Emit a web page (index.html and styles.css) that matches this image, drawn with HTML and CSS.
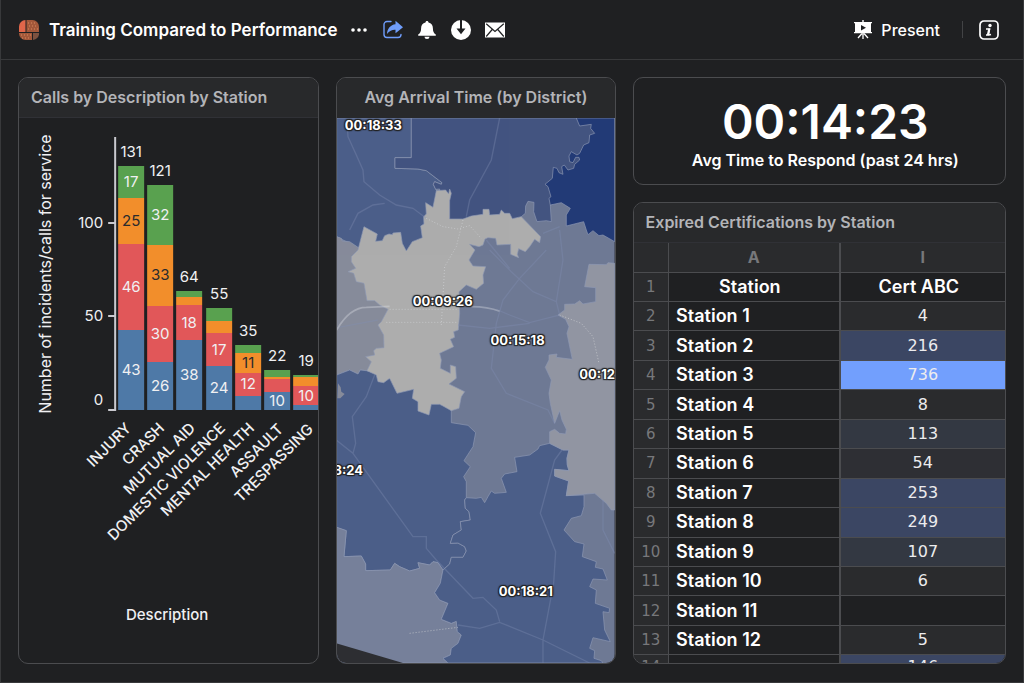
FILE: index.html
```
<!DOCTYPE html>
<html lang="en">
<head>
  <meta charset="UTF-8" />
  <meta name="viewport" content="width=device-width, initial-scale=1" />
  <title>Training Compared to Performance</title>
  <link rel="stylesheet" href="styles.css">
</head>
<body>

  <!-- TOP BAR -->
  <header class="topbar">
    <svg class="logo" viewBox="0 0 20 20" aria-hidden="true">
      <path fill="#e0664a" d="M6.500 0v12H0V6.500A6.500 6.500 0 0 1 6.500 0z"/>
      <path fill="#a3583a" d="M7.500 0h6A6.500 6.500 0 0 1 20 6.500V12H7.500z"/>
      <path fill="#a3583a" d="M0 13h13v7H6.500A6.500 6.500 0 0 1 0 13.500z"/>
      <path fill="#7d5240" d="M14 13h6a6.500 6.500 0 0 1-6 7z"/>
      <path stroke="#d98a5f" stroke-dasharray="1 2" d="M9 3h9M10 6h9M9 9h10M2 15h10M3 18h9"/>
    </svg>
    <h1>Training Compared to Performance</h1>
    <button class="icon-btn more" aria-label="More">
      <svg viewBox="0 0 20 20"><circle cx="4" cy="10" r="1.800"/><circle cx="10" cy="10" r="1.800"/><circle cx="16" cy="10" r="1.800"/></svg>
    </button>
    <button class="icon-btn share" aria-label="Share">
      <svg viewBox="0 0 20 20">
        <path fill="none" stroke="currentColor" stroke-width="1.400" stroke-linecap="round" d="M8 1.500H4A3 3 0 0 0 1 4.500v10a3 3 0 0 0 3 3h11a3 3 0 0 0 3-3"/>
        <path d="M12.500 .8L20 7.200l-7.500 6V9.800C9.500 9.600 6.500 10.600 4 14 4.300 8.700 7.500 4.800 12.500 4.300z"/>
      </svg>
    </button>
    <button class="icon-btn" aria-label="Alerts">
      <svg viewBox="0 0 20 20">
        <path d="M10 1c.9 0 1.500.6 1.500 1.500 2.900.7 4.400 2.900 4.400 5.700 0 3.200.8 4.900 2.900 6.300v1.300H1.200v-1.300c2.100-1.400 2.900-3.100 2.900-6.300 0-2.800 1.500-5 4.400-5.700C8.500 1.600 9.100 1 10 1z"/>
        <path d="M7.500 16.800h5a2.500 2.200 0 0 1-5 0z"/>
      </svg>
    </button>
    <button class="icon-btn" aria-label="Download">
      <svg viewBox="0 0 20 20">
        <circle cx="10" cy="10" r="10"/>
        <path fill="#1f2022" d="M9 0h2v8.500h3.500L10 14.200 5.500 8.500H9z"/>
      </svg>
    </button>
    <button class="icon-btn" aria-label="Email">
      <svg viewBox="0 0 20 20">
        <path d="M0 2.500h20v15H0z"/>
        <path fill="none" stroke="#1f2022" stroke-width="1.200" d="M1.200 3.700L10 11.500l8.800-7.800M1.200 16.500l6-7M18.800 16.500l-6-7"/>
      </svg>
    </button>

    <div class="topbar-right">
      <button class="present">
        <svg viewBox="0 0 20 20">
          <path d="M9.300 0h1.400v2h8.300v1.200h-1V12h1v1.300H1V12h1V3.200H1V2h8.300z"/>
          <path fill="#1f2022" d="M8 5l5 2.700-5 2.700z"/>
          <path fill="none" stroke="currentColor" stroke-width="1.300" d="M10 13v6M9 13.500L5 18M11 13.500l4 4.500"/>
        </svg>
        Present
      </button>
      <span class="divider"></span>
      <button class="icon-btn" aria-label="Info">
        <svg viewBox="0 0 20 20">
          <rect x="1" y="1" width="18" height="18" rx="4" fill="none" stroke="currentColor" stroke-width="1.700"/>
          <circle cx="11" cy="5.500" r="1.700"/>
          <path fill="none" stroke="currentColor" stroke-width="1.500" d="M7 9h3.500l-1.300 5.500q0 .9 2.800 0M7 15h3"/>
          <path fill="none" stroke="currentColor" stroke-width="2.200" d="M10.300 8.600L9 15"/>
        </svg>
      </button>
    </div>
  </header>

  <main class="board">

    <!-- CALLS CHART -->
    <section class="card">
      <h2>Calls by Description by Station</h2>
      <svg class="chart" viewBox="19 118 299 545" role="img" aria-label="Calls by description by station">
        <g class="axis">
          <path d="M108 410h8M108 223h8M108 316h8M115 137v274"/>
        </g>
        <g class="blue">
          <rect x="118" y="330" width="26" height="80"/>
          <rect x="147" y="362" width="26" height="48"/>
          <rect x="176" y="340" width="26" height="70"/>
          <rect x="206" y="366" width="26" height="44"/>
          <rect x="235" y="396" width="26" height="14"/>
          <rect x="264" y="392" width="26" height="18"/>
          <rect x="293" y="405" width="26" height="5"/>
        </g>
        <g class="red">
          <rect x="118" y="244" width="26" height="86"/>
          <rect x="147" y="306" width="26" height="56"/>
          <rect x="176" y="305" width="26" height="35"/>
          <rect x="206" y="333" width="26" height="33"/>
          <rect x="235" y="373" width="26" height="23"/>
          <rect x="264" y="379" width="26" height="13"/>
          <rect x="293" y="386" width="26" height="19"/>
        </g>
        <g class="orange">
          <rect x="118" y="198" width="26" height="46"/>
          <rect x="147" y="245" width="26" height="61"/>
          <rect x="176" y="297" width="26" height="8"/>
          <rect x="206" y="321" width="26" height="12"/>
          <rect x="235" y="353" width="26" height="20"/>
          <rect x="264" y="377" width="26" height="2"/>
          <rect x="293" y="377" width="26" height="9"/>
        </g>
        <g class="green">
          <rect x="118" y="166" width="26" height="32"/>
          <rect x="147" y="185" width="26" height="60"/>
          <rect x="176" y="291" width="26" height="6"/>
          <rect x="206" y="308" width="26" height="13"/>
          <rect x="235" y="345" width="26" height="8"/>
          <rect x="264" y="370" width="26" height="7"/>
          <rect x="293" y="375" width="26" height="2"/>
        </g>

        <!-- totals and segment values -->
        <g class="values">
          <text x="131" y="157">131</text>
          <text x="160" y="176">121</text>
          <text x="189" y="282">64</text>
          <text x="219" y="299">55</text>
          <text x="248" y="336">35</text>
          <text x="277" y="361">22</text>
          <text x="306" y="366">19</text>
          <text x="131" y="187">17</text>
          <text x="131" y="292">46</text>
          <text x="131" y="375">43</text>
          <text x="160" y="220">32</text>
          <text x="160" y="339">30</text>
          <text x="160" y="391">26</text>
          <text x="189" y="328">18</text>
          <text x="189" y="380">38</text>
          <text x="219" y="355">17</text>
          <text x="219" y="393">24</text>
          <text x="248" y="389">12</text>
          <text x="277" y="406">10</text>
          <text x="306" y="401">10</text>
          <g class="dark">
            <text x="131" y="226">25</text>
            <text x="160" y="280">33</text>
            <text x="248" y="368">11</text>
          </g>
        </g>

        <g class="ticks">
          <text x="103" y="228">100</text>
          <text x="103" y="321">50</text>
          <text x="103" y="405">0</text>
        </g>
        <g class="categories">
          <text transform="translate(132 429) rotate(-45)">INJURY</text>
          <text transform="translate(165 429) rotate(-45)">CRASH</text>
          <text transform="translate(196 429) rotate(-45)">MUTUAL AID</text>
          <text transform="translate(226 429) rotate(-45)">DOMESTIC VIOLENCE</text>
          <text transform="translate(255 429) rotate(-45)">MENTAL HEALTH</text>
          <text transform="translate(284 430) rotate(-45)">ASSAULT</text>
          <text transform="translate(314 430) rotate(-45)">TRESPASSING</text>
        </g>
        <text class="y-title" transform="translate(51 274) rotate(-90)">Number of incidents/calls for service</text>
        <text class="x-title" x="167" y="620">Description</text>
      </svg>
    </section>

    <!-- DISTRICT MAP -->
    <section class="card">
      <h2 class="centered">Avg Arrival Time (by District)</h2>
      <div class="map">
        <svg viewBox="21 144 834 1635" preserveAspectRatio="xMidYMid slice" aria-hidden="true">
          <rect x="21" y="144" width="834" height="1635" fill="#6e7994"/>
          <g class="districts">
            <path fill="#4c5f89" d="M21 144H245V263H196V295L265 297 290 302 337 338 335 343 315 335 311 343 322 365 316 500 230 580 100 560 60 520 21 500z"/>
            <path fill="#435480" d="M245 144H800V200L700 385 662 405 665 455 650 452 622 455 612 425 613 397 595 394 588 408 587 430 575 440 520 500H330L330 357 318 358 311 343 315 335 335 343 337 338 290 302 265 297 196 295V263H245z"/>
            <path fill="#223a76" d="M740 144H855V515L820 495 808 497 790 482 775 494 770 480 762 455 710 468V435L722 415 695 398 662 405 658 385 664 380 655 350 646 343 668 325 671 292 682 295 688 308 700 313 696 290 704 285 715 300 732 295 735 283 750 270 748 262 738 262 730 278 720 275 718 258 725 245 742 255 750 250 762 225 778 218 780 195 795 190 783 175 785 163 750 168z"/>
            <path fill="#868b9a" d="M21 500L35 505 38 513 60 515 85 532 200 600V900L110 902 92 900 85 912 60 900 21 915z"/>
            <path fill="#4b5e88" d="M21 915L60 900 85 912 92 900 110 902 140 910 365 1000V1058L415 1066 438 1088 430 1130 403 1172 422 1190 402 1220 410 1235 410 1283 405 1290 407 1315 418 1325 422 1350 392 1355 395 1380 370 1395 362 1420 385 1419 405 1430 410 1443 400 1462 365 1462 360 1482 340 1500 325 1478 310 1475 300 1485 265 1478 270 1495 240 1503 210 1490 195 1480 182 1500 108 1502 108 1482 95 1458 43 1460 50 1382 21 1372z"/>
            <path fill="#76809a" d="M21 1372L50 1382 43 1460 95 1458 108 1482 108 1502 182 1500 195 1480 210 1490 240 1503 270 1495 265 1478 300 1485 310 1475 325 1478 340 1500 332 1540 315 1568 330 1590 355 1600 335 1648 365 1660 380 1654 383 1685 395 1695 385 1720 365 1735 362 1755 340 1765 355 1779H21z"/>
            <path fill="#4b5e88" d="M340 1500L360 1482 365 1462 400 1462 410 1443 405 1430 385 1419 362 1420 370 1395 395 1380 392 1355 422 1350 418 1325 407 1315 405 1290 410 1283 440 1285 455 1282 465 1298 475 1280 485 1263 495 1270 530 1267 515 1225 525 1212 562 1205 555 1162 600 1155 625 1137 630 1127 660 1120 700 1140 718 1140 712 1165 713 1185 718 1202 675 1198V1218L717 1233 710 1277 763 1275V1310L755 1337 725 1345 703 1380 735 1415 763 1422 758 1460 800 1475 797 1492 820 1497 833 1530 790 1527 780 1550 800 1560 797 1600 840 1615 838 1628 820 1625 825 1680 842 1715 790 1703 780 1735 795 1742 793 1765 815 1772 820 1779H355L340 1765 362 1755 365 1735 385 1720 395 1695 383 1685 380 1654 365 1660 335 1648 355 1600 330 1590 315 1568 332 1540z"/>
            <path fill="#9195a2" d="M855 580L835 578 830 584 778 583 765 650 798 653V695L760 702 750 692 735 702 705 703V720L685 735 708 748 718 770 712 790 728 868 680 862 682 852 658 855 658 870 647 892 665 930 658 970 662 1000 675 1060 690 1022 697 1050 710 1078 708 1092 690 1090 675 1078 660 1085V1120L700 1140 718 1140 712 1165 713 1185 718 1202 675 1198V1218L717 1233 710 1277 795 1270 830 1300 845 1320H855z"/>
            <path fill="#adadad" d="M103 470L143 492 138 514 158 512 165 497 178 492 188 494 190 489 213 487 218 520 230 543 248 515 278 503 273 468 283 462 282 440 290 432 288 398 310 412 320 362 348 360 357 372 360 357 365 370 360 392V447L400 447 425 438 460 433V418H478L480 435 510 433 515 420 525 430 540 430 548 446 575 440 633 500 630 518 615 508 600 530 587 545 567 536 563 553 567 563 543 553V523L502 525 498 505 475 503 466 507 460 525 448 530 420 523 436 540 418 570 430 588 468 590 460 615 462 640 440 658 410 645 388 665 390 730 386 780 372 785 375 802 362 808 372 830 330 850 335 870 332 895 362 910 362 885 378 890 380 925 358 942 405 965 395 980 388 1015 365 1022 340 1008 330 1003 305 1003 298 1035 265 1023V995L248 985 252 958 202 970 180 925 162 938 145 935 140 915 112 902 125 875 108 860 135 855 132 842 140 835 163 833 162 795 145 765 155 755 175 718 150 705 135 692 112 692 103 640 80 635 72 610 55 605 78 595 65 575 65 560 85 540z"/>
          </g>
          <!-- sliver of uncovered base map -->
          <path fill="#2d2e32" d="M21 1720L220 1779H21z"/>
          <path fill="#868b9a" d="M25 940L33 952 35 965 45 972 32 985H23z"/>
          <g class="roads">
            <path d="M52 150L55 200 80 255 100 300 103 335 150 375 200 405 250 415 290 445M60 480L85 430 130 405 165 400M510 144L485 270 420 390 410 440"/>
            <path d="M480 540L545 605 610 665 680 695 690 735M650 540L570 625 520 690 500 760 485 895 530 970 655 1020 675 1060M690 480L700 570 680 695M640 490L690 470M470 510L540 595"/>
            <path d="M135 915L110 980 68 1040 78 1120 70 1150 20 1110M70 1150L250 1400H290V1435L320 1470 430 1585 460 1582 500 1620 510 1655M385 1665L450 1675 510 1657 640 1710 780 1779M697 1140L675 1170 632 1330 678 1445 672 1540 640 1710V1779M820 1290V1380L855 1450"/>
            <path d="M500 718L540 735 600 758 650 745 690 735M21 773L145 750M385 765L480 775 600 760"/>
            <path class="highway" d="M21 780Q60 712 110 712L180 709M425 710Q475 710 510 724"/>
          </g>
          <g class="local-roads">
            <path d="M290 445L340 470 385 477 420 467 455 505M400 450L380 530 345 590 340 680 335 765M180 718H385M170 757H380M240 1690L385 1672M690 735L755 760 790 800 808 880"/>
          </g>
        </svg>
        <span class="pin pin-nw">00:18:33</span>
        <span class="pin pin-mid">00:09:26</span>
        <span class="pin pin-center">00:15:18</span>
        <span class="pin pin-east">00:12:41</span>
        <span class="pin pin-west">00:18:24</span>
        <span class="pin pin-south">00:18:21</span>
      </div>
    </section>

    <div class="column">
      <!-- RESPONSE TIME -->
      <section class="card stat">
        <strong>00:14:23</strong>
        <p>Avg Time to Respond (past 24 hrs)</p>
      </section>

      <!-- CERTIFICATIONS TABLE -->
      <section class="card sheet">
        <h2>Expired Certifications by Station</h2>
        <div class="sheet-body">
          <table>
            <colgroup><col class="col-num"><col class="col-a"><col></colgroup>
            <thead>
              <tr><td></td><th scope="col">A</th><th scope="col">I</th></tr>
            </thead>
            <tbody>
              <tr class="names"><th scope="row">1</th><td>Station</td><td>Cert ABC</td></tr>
              <tr><th scope="row">2</th><td>Station 1</td><td>4</td></tr>
              <tr><th scope="row">3</th><td>Station 2</td><td class="high">216</td></tr>
              <tr><th scope="row">4</th><td>Station 3</td><td class="max">736</td></tr>
              <tr><th scope="row">5</th><td>Station 4</td><td>8</td></tr>
              <tr><th scope="row">6</th><td>Station 5</td><td class="mid">113</td></tr>
              <tr><th scope="row">7</th><td>Station 6</td><td class="low">54</td></tr>
              <tr><th scope="row">8</th><td>Station 7</td><td class="high">253</td></tr>
              <tr><th scope="row">9</th><td>Station 8</td><td class="high">249</td></tr>
              <tr><th scope="row">10</th><td>Station 9</td><td class="mid">107</td></tr>
              <tr><th scope="row">11</th><td>Station 10</td><td>6</td></tr>
              <tr><th scope="row">12</th><td>Station 11</td><td class="empty"></td></tr>
              <tr><th scope="row">13</th><td>Station 12</td><td>5</td></tr>
              <tr class="last"><th scope="row">14</th><td></td><td class="high">146</td></tr>
            </tbody>
          </table>
        </div>
      </section>
    </div>

  </main>

</body>
</html>
```
FILE: styles.css
```
/* ---------------
   GENERAL
   ---------------*/
* {
  box-sizing: border-box;
}
body {
  margin: 0;
  height: 100vh;
  min-height: 640px;
  display: flex;
  flex-direction: column;
  background: #1f2022;
  border: 1px solid #38393b;
  border-top: 0;
  color: #fff;
  font-family: Inter, "Liberation Sans", sans-serif;
  font-size: 16px;
  overflow: hidden;
}
h1, h2, p {
  margin: 0;
}
button {
  padding: 0;
  border: 0;
  background: none;
  color: inherit;
  font: inherit;
  cursor: pointer;
}
button svg {
  display: block;
  width: 20px;
  height: 20px;
  fill: currentColor;
}

/* ---------------
   TOP BAR
   ---------------*/
.topbar {
  flex: none;
  height: 60px;
  padding: 0 24px 0 18px;
  display: flex;
  align-items: center;
  gap: 14px;
  border-bottom: 1px solid #38393b;
}
.logo {
  width: 20px;
  height: 20px;
  margin-right: -4px;
}
h1 {
  font-size: 17px;
  font-weight: 600;
  white-space: nowrap;
}
.more {
  margin: 0 0 0 -3px;
}
.share {
  color: #6f9dfb;
}
.topbar-right {
  margin-left: auto;
  display: flex;
  align-items: center;
  gap: 16px;
}
.present {
  display: flex;
  align-items: center;
  gap: 8px;
  font-weight: 500;
}
.divider {
  width: 1px;
  height: 17px;
  margin-left: 6px;
  background: #424345;
}

/* ---------------
   BOARD + CARDS
   ---------------*/
.board {
  flex: 1;
  min-height: 0;
  padding: 17px 17px 18px;
  display: grid;
  grid-template-columns: 301fr 279fr 373fr;
  gap: 17px;
}
.column {
  min-width: 0;
  min-height: 0;
  display: flex;
  flex-direction: column;
  gap: 17px;
}
.card {
  min-width: 0;
  min-height: 0;
  display: flex;
  flex-direction: column;
  border: 1px solid #4b4c4f;
  border-radius: 10px;
  overflow: hidden;
}
.card h2 {
  flex: none;
  height: 40px;
  padding: 0 12px;
  background: #28292b;
  border-bottom: 1px solid #303136;
  color: #b3b4b8;
  font-size: 16px;
  font-weight: 600;
  line-height: 39px;
  white-space: nowrap;
}
.card h2.centered {
  border-bottom: 0;
  text-align: center;
}

/* ---------------
   CHART
   ---------------*/
.chart {
  width: 100%;
  font-size: 15px;
  fill: #f0f0f2;
}
.axis {
  fill: none;
  stroke: #c9c9cf;
  stroke-width: 2px;
}
.blue { fill: #4e79a7; }
.red { fill: #e15759; }
.orange { fill: #f28e2b; }
.green { fill: #59a14f; }
.values {
  font-size: 15px;
  text-anchor: middle;
}
.dark {
  fill: #2a2b2e;
}
.ticks,
.categories {
  text-anchor: end;
}
.categories {
  font-size: 15px;
  font-weight: 500;
}
.x-title {
  font-weight: 500;
  text-anchor: middle;
}
.y-title {
  font-size: 16px;
  text-anchor: middle;
}

/* ---------------
   MAP
   ---------------*/
.map {
  position: relative;
  flex: 1;
  min-height: 0;
  overflow: hidden;
}
.map svg {
  display: block;
  width: 100%;
  height: 100%;
}
.districts {
  stroke: #8e98b4;
  stroke-width: 2px;
  stroke-linejoin: round;
}
.roads {
  fill: none;
  stroke: #828fb4;
  stroke-width: 4px;
  opacity: 0.35;
}
.highway {
  stroke: #e2e4ea;
  stroke-width: 5px;
}
.local-roads {
  fill: none;
  stroke: #d0d1d4;
  stroke-width: 3px;
  stroke-dasharray: 3 6;
  opacity: 0.7;
}
.pin {
  position: absolute;
  transform: translate(-50%, -50%);
  font-size: 13px;
  font-weight: 700;
  text-shadow: 0 0 2px #222, 1px 1px 1px #222, -1px -1px 1px #222, 1px -1px 1px #222, -1px 1px 1px #222;
}
.pin-nw { left: 13%; top: 7px; }
.pin-mid { left: 38%; top: 183px; }
.pin-center { left: 65%; top: 222px; }
.pin-east { left: 97%; top: 256px; }
.pin-west { left: -1%; top: 352px; }
.pin-south { left: 68%; top: 473px; }

/* ---------------
   STAT
   ---------------*/
.stat {
  flex: none;
  height: 108px;
  padding: 6px 0 0 12px;
  align-items: center;
  justify-content: center;
}
.stat strong {
  font-size: 48px;
  font-weight: 600;
  line-height: 52px;
}
.stat p {
  font-size: 16px;
  font-weight: 600;
  line-height: 24px;
}

/* ---------------
   SHEET
   ---------------*/
.sheet {
  flex: 1;
}
.sheet-body {
  flex: 1;
  min-height: 0;
  overflow: hidden;
}
table {
  width: 100%;
  height: 442px;
  table-layout: fixed;
  border-collapse: collapse;
}
.col-num { width: 35px; }
.col-a { width: 171px; }
td, th {
  height: 29px;
  padding: 0;
  border-right: 1px solid #4b4c4f;
  border-bottom: 1px solid #4b4c4f;
  line-height: 20px;
  text-align: center;
}
tr > :nth-child(2) {
  border-right-width: 2px;
}
tr > :last-child {
  border-right: 0;
}
thead tr,
tbody th {
  background: #2a2b2d;
  color: #77787b;
  font-weight: 500;
}
tbody th {
  font-family: "DejaVu Sans", sans-serif;
  font-size: 15px;
  font-weight: 400;
}
tbody td:nth-child(2) {
  padding-left: 7px;
  font-size: 18px;
  font-weight: 600;
  text-align: left;
}
tbody td:last-child {
  background: #2a2b2d;
  color: #ececee;
  font-family: "DejaVu Sans", sans-serif;
  font-size: 16px;
}
tbody td.low { background: #2e2f34; }
tbody td.mid { background: #333842; }
tbody td.high { background: #3b4663; }
tbody td.max { background: #729ffd; }
tbody td.empty { background: #1f2022; }
.names td:nth-child(2),
.names td:last-child {
  padding: 0 8px 0 0;
  background: #1f2022;
  color: #fff;
  font-family: inherit;
  font-size: 18px;
  font-weight: 600;
  text-align: center;
}
.last > * {
  vertical-align: top;
  line-height: 24px;
}
```
